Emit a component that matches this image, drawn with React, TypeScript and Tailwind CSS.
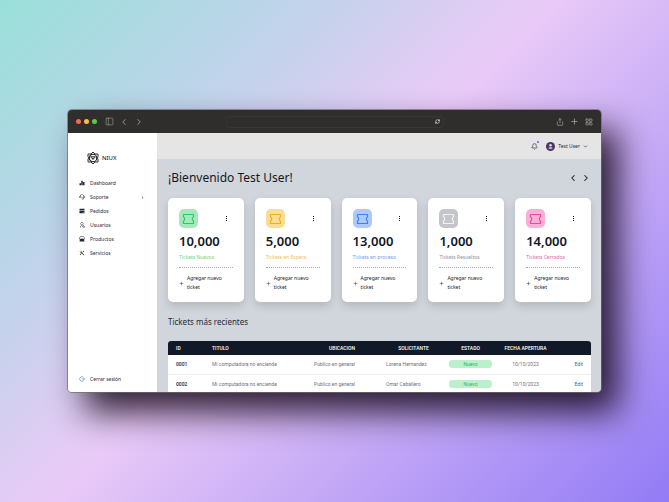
import React from "react";
import { ChevronDown, ChevronLeft, ChevronRight, LayoutGrid, PanelLeft, Plus, RefreshCw, Share, Bell } from "lucide-react";
import {
  RiBarChart2Fill,
  RiCustomerService2Line,
  RiBankCardFill,
  RiUserSearchLine,
  RiStore2Fill,
  RiToolsFill,
  RiLogoutCircleRLine,
  RiArrowRightSLine,
} from "react-icons/ri";

const NAV = [
  { label: "Dashboard", Icon: RiBarChart2Fill },
  { label: "Soporte", Icon: RiCustomerService2Line, nested: true },
  { label: "Pedidos", Icon: RiBankCardFill },
  { label: "Usuarios", Icon: RiUserSearchLine },
  { label: "Productos", Icon: RiStore2Fill },
  { label: "Servicios", Icon: RiToolsFill },
];

const CARDS = [
  { total: "10,000", label: "Tickets Nuevos", box: "bg-[#a3e9b9] text-[#35c466]", text: "text-[#6fd67c]" },
  { total: "5,000", label: "Tickets en Espera", box: "bg-[#f9dd93] text-[#eab01e]", text: "text-[#ecc04f]" },
  { total: "13,000", label: "Tickets en proceso", box: "bg-[#adc9fb] text-[#3f82ee]", text: "text-[#6c9df0]" },
  { total: "1,000", label: "Tickets Resueltos", box: "bg-[#c3c5c9] text-[#f1f2f4]", text: "text-[#8b8f97]" },
  { total: "14,000", label: "Tickets Cerrados", box: "bg-[#f9b0d6] text-[#e44c9c]", text: "text-[#e264ab]" },
];

const ROWS = [
  { id: "0001", title: "Mi computadora no enciende", place: "Publico en general", who: "Lorena Hernandez", state: "Nuevo", date: "10/10/2023" },
  { id: "0002", title: "Mi computadora no enciende", place: "Publico en general", who: "Omar Caballero", state: "Nuevo", date: "10/10/2023" },
];

function TicketIcon() {
  return (
    <svg viewBox="0 0 26 24" className="h-3 w-[13px]" fill="none" stroke="currentColor" strokeWidth="2.4" strokeLinejoin="round">
      <path d="M3 3h20v5c-1.600 .6-2.400 2-2.400 4s.8 3.400 2.400 4v5H3v-5c1.600-.6 2.400-2 2.400-4S4.600 8.600 3 8z" />
    </svg>
  );
}

function Logo() {
  return (
    <svg viewBox="0 0 28 28" className="size-[14px]" fill="none" stroke="#1b1b1b" strokeWidth="1.8">
      <path d="M14 2l4 4h6v6l-1.500 2 1.500 2v6h-6l-4 4-4-4H4v-6l1.500-2L4 12V6h6z" strokeLinejoin="round" />
      <circle cx="14" cy="14" r="7.500" strokeWidth="2.200" />
      <path d="M9.500 11.500h9l-2 3h-5zM14 14.500V18" strokeWidth="1.8" />
    </svg>
  );
}

function TitleBar() {
  return (
    <header className="flex h-[23px] shrink-0 items-center justify-between bg-[#302e2c] px-2 text-[#a8a6a4]">
      <div className="flex flex-1 items-center">
        <div className="flex gap-[3px]">
          <span className="size-[5px] rounded-full bg-[#ec6a5e]" />
          <span className="size-[5px] rounded-full bg-[#f4bf4f]" />
          <span className="size-[5px] rounded-full bg-[#61c554]" />
        </div>
        <button aria-label="Barra lateral" className="ml-2">
          <PanelLeft className="size-[9px]" strokeWidth={1.5} />
        </button>
        <button aria-label="Atrás" className="ml-[5px]">
          <ChevronLeft className="size-[10px]" strokeWidth={2} />
        </button>
        <button aria-label="Adelante" className="ml-[5px]">
          <ChevronRight className="size-[10px]" strokeWidth={2} />
        </button>
      </div>
      <div className="flex h-3 w-[218px] items-center rounded-[3px] border border-[#383634] pr-[3px]">
        <input aria-label="Dirección" className="h-full min-w-0 flex-1 bg-transparent px-1 text-[6px] outline-none" />
        <button aria-label="Recargar">
          <RefreshCw className="size-[5px] text-white" strokeWidth={2.5} />
        </button>
      </div>
      <div className="flex flex-1 items-center justify-end gap-[6px]">
        <button aria-label="Compartir">
          <Share className="size-[8px]" strokeWidth={2} />
        </button>
        <button aria-label="Nueva pestaña">
          <Plus className="size-[9px]" strokeWidth={2} />
        </button>
        <button aria-label="Pestañas">
          <LayoutGrid className="size-[8px]" strokeWidth={2} />
        </button>
      </div>
    </header>
  );
}

function Sidebar() {
  return (
    <aside className="flex w-[89px] shrink-0 flex-col justify-between bg-white pb-[9px] text-[5px] leading-2 text-[#1f2937]">
      <div>
        <a href="#" className="mt-[18px] ml-[18px] flex items-center gap-[2px] text-[6px] text-black">
          <Logo />
          NIUX
        </a>
        <nav className="mt-[14px] flex flex-col gap-[6px] pr-3 pl-[11px]">
          {NAV.map(({ label, Icon, nested }) => (
            <a key={label} href="#" className="flex items-center gap-[5px]">
              <Icon className="size-[6px]" />
              <span className="flex-1">{label}</span>
              {nested && <RiArrowRightSLine className="size-[5px]" />}
            </a>
          ))}
        </nav>
      </div>
      <button className="flex items-center gap-[5px] pl-[11px]">
        <RiLogoutCircleRLine className="size-[6px] text-[#3b6fb5]" />
        Cerrar sesión
      </button>
    </aside>
  );
}

function TopBar() {
  return (
    <div className="flex h-[26px] shrink-0 items-center justify-end gap-2 bg-[#e5e5e5] pr-[13px] text-[5px] leading-2 text-[#1f2937]">
      <button aria-label="Notificaciones" className="relative">
        <Bell className="size-[7px]" strokeWidth={2} />
        <span className="absolute -top-[2px] -right-[1px] size-[2px] rounded-full bg-[#7c4dff]" />
      </button>
      <button className="flex items-center gap-[3px]">
        <svg viewBox="0 0 18 18" className="size-[9px]">
          <circle cx="9" cy="9" r="9" fill="#4a3763" />
          <circle cx="9" cy="6.500" r="2.500" fill="#e6dcf2" />
          <path d="M5 14c0-3 2-4.500 4-4.500s4 1.500 4 4.500z" fill="#b9a5d3" />
        </svg>
        Test User
        <ChevronDown className="size-[5px]" strokeWidth={3} />
      </button>
    </div>
  );
}

function Card({ total, label, box, text }: (typeof CARDS)[number]) {
  return (
    <article className="rounded-[5px] bg-white px-[11px] pt-[11px] pb-[10px] shadow-[0_4px_8px_rgba(0,0,0,0.14)]">
      <div className="flex items-center justify-between">
        <span className={`flex size-[19px] items-center justify-center rounded-[5px] ${box}`}>
          <TicketIcon />
        </span>
        <button aria-label="Opciones" className="pr-[6px]">
          <svg viewBox="0 0 1 5" className="h-[5px] w-px" fill="#111827" shapeRendering="crispEdges">
            <rect width="1" height="1" />
            <rect y="2" width="1" height="1" />
            <rect y="4" width="1" height="1" />
          </svg>
        </button>
      </div>
      <p className="mt-[5px] text-[13px] leading-4 font-semibold text-[#111827]">{total}</p>
      <p className={`mt-1 text-[5px] leading-2 whitespace-nowrap ${text}`}>{label}</p>
      <hr className="mt-[6px] border-t border-dotted border-[#a3a8b1]" />
      <button className="mt-[6px] flex items-center gap-[3px] text-left text-[5px] leading-[9px] text-[#111827]">
        <Plus className="size-[5px] shrink-0" strokeWidth={2} />
        <span>Agregar nuevo ticket</span>
      </button>
    </article>
  );
}

function TicketTable() {
  return (
    <table className="w-full table-fixed border-collapse overflow-hidden rounded-t-[3px] bg-white text-left font-[Roboto,'Noto_Sans',sans-serif] text-[5px] leading-2">
      <colgroup>
        <col className="w-[36px]" />
        <col className="w-[102px]" />
        <col className="w-[72px]" />
        <col className="w-[71px]" />
        <col className="w-[43px]" />
        <col className="w-[67px]" />
        <col className="w-[32px]" />
      </colgroup>
      <thead className="bg-[#111827] text-white">
        <tr className="h-[14px]">
          <th className="pl-2 font-medium">ID</th>
          <th className="pl-2 font-medium">TITULO</th>
          <th className="text-center font-medium">UBICACION</th>
          <th className="text-center font-medium">SOLICITANTE</th>
          <th className="text-center font-medium">ESTADO</th>
          <th className="text-center font-medium">FECHA APERTURA</th>
          <th aria-label="Acciones" />
        </tr>
      </thead>
      <tbody className="text-[#6b7280]">
        {ROWS.map((r) => (
          <tr key={r.id} className="h-[19px] border-b border-[#eceef1]">
            <td className="pl-2 font-medium text-[#111827]">{r.id}</td>
            <td className="pl-2 whitespace-nowrap">{r.title}</td>
            <td className="pl-2 whitespace-nowrap">{r.place}</td>
            <td className="pl-2 whitespace-nowrap">{r.who}</td>
            <td>
              <span className="block rounded-[3px] bg-[#bbf0cd] text-center text-[#35b85f]">{r.state}</span>
            </td>
            <td className="text-center">{r.date}</td>
            <td className="pr-2 text-right">
              <a href="#" className="text-[#2563eb]">
                Edit
              </a>
            </td>
          </tr>
        ))}
      </tbody>
    </table>
  );
}

export default function App() {
  return (
    <div className="flex h-screen flex-col overflow-hidden bg-[linear-gradient(135deg,#9ae0da_0%,#bdd4e9_24%,#e9caf7_47%,#927bf5_100%)] px-[68px] py-[110px] font-['Noto_Sans','Open_Sans',sans-serif]">
      <div className="flex min-h-0 flex-1 flex-col overflow-hidden rounded-[4px] shadow-[0_0_0_1px_rgba(110,110,110,0.7),17px_20px_34px_0_rgba(20,8,25,0.88)]">
        <TitleBar />
        <div className="flex min-h-0 flex-1">
          <Sidebar />
          <div className="flex min-w-0 flex-1 flex-col overflow-hidden bg-[#d1d5dc]">
            <TopBar />
            <main className="min-h-0 flex-1 overflow-hidden pt-[10px] pr-[10px] pl-[11px] text-[#1f2937]">
              <div className="flex items-center justify-between">
                <h1 className="text-[12px] leading-[18px] text-[#111827]">¡Bienvenido Test User!</h1>
                <div className="flex gap-[3px] text-[#111827]">
                  <button aria-label="Anterior">
                    <ChevronLeft className="size-[10px]" strokeWidth={2.5} />
                  </button>
                  <button aria-label="Siguiente">
                    <ChevronRight className="size-[10px]" strokeWidth={2.5} />
                  </button>
                </div>
              </div>
              <section className="mt-[11px] grid grid-cols-5 gap-[11px]">
                {CARDS.map((c) => (
                  <Card key={c.label} {...c} />
                ))}
              </section>
              <h2 className="mt-[13px] mb-[13px] text-[8px] leading-[13px]">Tickets más recientes</h2>
              <TicketTable />
            </main>
          </div>
        </div>
      </div>
    </div>
  );
}
